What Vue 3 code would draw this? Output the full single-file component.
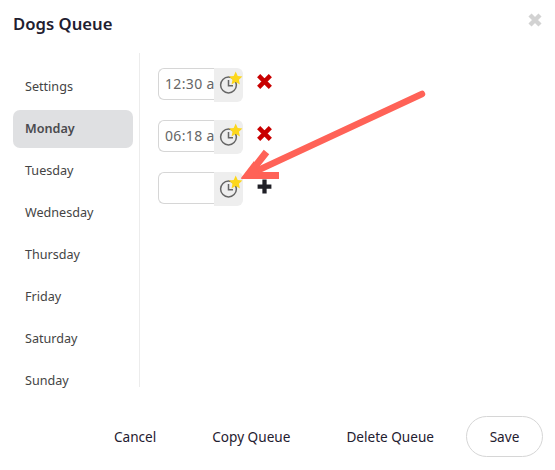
<script setup>
import { ref } from 'vue'

const days = ['Settings', 'Monday', 'Tuesday', 'Wednesday', 'Thursday', 'Friday', 'Saturday', 'Sunday']
const active = ref('Monday')

const rows = ref([
  { id: 1, time: '12:30 am' },
  { id: 2, time: '06:18 am' },
  { id: 3, time: '' }
])
</script>

<template>
  <div class="modal">
    <header class="modal-header">
      <h1 class="title">Dogs Queue</h1>
      <button class="close" aria-label="Close">
        <svg width="16" height="16" viewBox="0 0 16 16">
          <path d="M3 3L13 13M13 3L3 13" stroke="#d2d2d2" stroke-width="4.4" />
        </svg>
      </button>
    </header>

    <div class="modal-body">
      <nav class="sidebar">
        <div
          v-for="day in days"
          :key="day"
          class="nav-item"
          :class="{ active: day === active }"
        >
          {{ day }}
        </div>
      </nav>

      <section class="times">
        <div v-for="row in rows" :key="row.id" class="time-row">
          <div class="time-input">
            <input class="input" type="text" :value="row.time" />
            <span class="addon">
              <svg class="clock" width="29" height="34" viewBox="0 0 29 34">
                <circle cx="14.5" cy="17" r="7.9" fill="none" stroke="#666" stroke-width="1.5" />
                <path d="M14.5 12V17.8H19" fill="none" stroke="#666" stroke-width="1.5" />
                <polygon
                  points="21.7,3.6 23.7,8 28.4,8.5 24.9,11.7 25.9,16.4 21.7,14 17.5,16.4 18.5,11.7 15,8.5 19.7,8"
                  fill="#fdd71c"
                />
              </svg>
            </span>
          </div>
          <svg v-if="row.time" class="action" width="17" height="17" viewBox="0 0 16 16">
            <path d="M2.5 2.5L13.5 13.5M13.5 2.5L2.5 13.5" stroke="#c80000" stroke-width="4.2" />
          </svg>
          <svg v-else class="action plus" width="17" height="17" viewBox="0 0 16 16">
            <path d="M8 1.5V14.5M1.5 8H14.5" stroke="#1f1f26" stroke-width="4" />
          </svg>
        </div>
      </section>
    </div>

    <footer class="modal-footer">
      <button class="link-btn">Cancel</button>
      <button class="link-btn">Copy Queue</button>
      <button class="link-btn">Delete Queue</button>
      <button class="save-btn">Save</button>
    </footer>

    <!-- annotation drawn over the screenshot -->
    <svg class="arrow" width="555" height="470" viewBox="0 0 555 470">
      <path d="M422 94L252 173" fill="none" stroke="#ff6257" stroke-width="6.5" stroke-linecap="round" />
      <path d="M266.5 152L248 175.5H279" fill="none" stroke="#ff6257" stroke-width="7" />
      <polygon points="241,178 254,161 260,176" fill="#ff6257" />
    </svg>
  </div>
</template>

<style>
html,
body {
  margin: 0;
  background: #fff;
}
</style>

<style scoped>
.modal {
  position: relative;
  width: 555px;
  height: 470px;
  overflow: hidden;
  background: #fff;
  font-family: "Noto Sans", "Open Sans", sans-serif;
  color: #1f2030;
}

.modal-header {
  height: 53px;
  padding: 0 12px 0 13px;
  box-sizing: border-box;
  display: flex;
  justify-content: space-between;
  align-items: flex-start;
}

.title {
  margin: 12px 0 0;
  font-size: 16.7px;
  line-height: 24px;
  font-weight: 600;
}

.close {
  margin-top: 12px;
  padding: 0;
  border: none;
  background: none;
  height: 16px;
}

.modal-body {
  height: 334px;
  display: flex;
}

.sidebar {
  width: 120px;
  margin-left: 13px;
  padding-top: 15px;
  flex-shrink: 0;
}

.nav-item {
  height: 38px;
  line-height: 37px;
  margin-bottom: 4px;
  padding-left: 12px;
  border-radius: 7px;
  font-size: 12.6px;
  color: #444;
}

.nav-item.active {
  background: #dfe0e2;
  font-weight: 600;
  color: #4a4a4e;
}

.times {
  margin-left: 6px;
  padding: 15px 0 0 18px;
  border-left: 1px solid #ececec;
  flex: 1;
}

.time-row {
  display: flex;
  align-items: flex-start;
  height: 34px;
  margin-bottom: 18px;
}

.time-input {
  display: flex;
  width: 85px;
}

.input {
  width: 56px;
  height: 32px;
  box-sizing: border-box;
  padding: 0 0 2px 6px;
  border: 1px solid #d6d6d6;
  border-right: none;
  border-radius: 6px 0 0 6px;
  outline: none;
  font-family: inherit;
  font-size: 14px;
  letter-spacing: 0.35px;
  color: #666;
  background: #fff;
}

.addon {
  width: 29px;
  height: 34px;
  background: #eee;
  border-radius: 0 6px 6px 0;
  display: flex;
}

.action {
  margin: 5px 0 0 13px;
}

.plus {
  margin-top: 6px;
}

.modal-footer {
  padding: 29px 12px 0 0;
  display: flex;
  justify-content: flex-end;
  align-items: center;
}

.link-btn,
.save-btn {
  font-family: inherit;
  font-size: 13.6px;
  color: #1f2030;
  background: none;
  cursor: pointer;
}

.link-btn {
  border: none;
  padding: 0;
  margin-right: 56px;
}

.link-btn:nth-child(3) {
  margin-right: 32px;
}

.save-btn {
  width: 77px;
  height: 41px;
  border: 1px solid #d6d6d6;
  border-radius: 21px;
}

.arrow {
  position: absolute;
  left: 0;
  top: 0;
  pointer-events: none;
}
</style>
